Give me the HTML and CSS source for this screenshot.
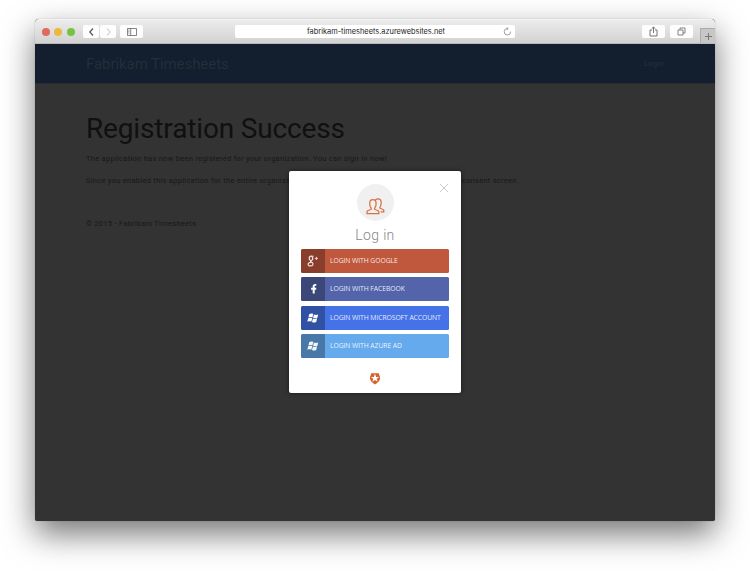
FILE: index.html
```html
<!DOCTYPE html>
<html lang="en">
<head>
<meta charset="utf-8">
<title>Fabrikam Timesheets</title>
<link rel="stylesheet" href="styles.css">
</head>
<body>
<div class="window">
  <header class="toolbar">
    <div class="lights"><i class="red"></i><i class="yellow"></i><i class="green"></i></div>
    <div class="history">
      <button class="tool"><svg width="7" height="10" viewBox="0 0 7 10"><path d="M5 1.5 1.8 5 5 8.5" stroke="#555" stroke-width="1.2"/></svg></button>
      <button class="tool"><svg width="7" height="10" viewBox="0 0 7 10"><path d="M2 1.5 5.2 5 2 8.5" stroke="#ccc" stroke-width="1.1"/></svg></button>
    </div>
    <button class="tool wide"><svg width="10" height="8" viewBox="0 0 10 8"><path d="M.5.5h9v7h-9zM3.7.5v7M1.4 2.2h1M1.4 3.7h1M1.4 5.2h1" stroke="#666" stroke-width=".8"/></svg></button>
    <div class="address"><span>fabrikam-timesheets.azurewebsites.net</span><svg class="reload" width="9" height="9" viewBox="0 0 9 9"><path d="M7.6 4.6A3.2 3.2 0 1 1 4.6 1.6M3.5.1 5.2 1.6 3.7 3.1" stroke="#888" stroke-width=".8"/></svg></div>
    <div class="actions">
      <button class="tool wide"><svg width="9" height="11" viewBox="0 0 9 11"><path d="M3 4H1v6h7V4H6M4.5 7V1M2.8 2.7 4.5 1l1.7 1.7" stroke="#666" stroke-width=".9"/></svg></button>
      <button class="tool wide"><svg width="9" height="9" viewBox="0 0 9 9"><path d="M1 3h5v5H1zM3 3V1h5v5H6" stroke="#777" stroke-width=".9"/></svg></button>
    </div>
    <button class="newtab"><svg width="9" height="9" viewBox="0 0 9 9"><path d="M4.5 1v7M1 4.5h7" stroke="#777"/></svg></button>
  </header>
  <nav class="navbar"><span class="brand">Fabrikam Timesheets</span><span class="login">Login</span></nav>
  <main class="page">
    <h1>Registration Success</h1>
    <p class="first">The application has now been registered for your organization. You can sign in now!</p>
    <p class="second"><span>Since you enabled this application for the entire organization, your users will not see the</span><span>consent screen.</span></p>
    <footer>© 2015 - Fabrikam Timesheets</footer>
  </main>
  <section class="dialog">
    <svg class="close" width="10" height="10" viewBox="0 0 10 10"><path d="m1 1 8 8M9 1 1 9" stroke="#c4c4c4" stroke-width=".9"/></svg>
    <div class="avatar"><svg width="19" height="17" viewBox="0 0 19 17"><path d="M1 15.6v-1.9c0-1.1 1.3-1.5 3.7-2.2.7-.3.7-1 .3-1.5C3.9 8.6 3.7 7.4 3.7 5.4c0-2.3 1.2-3.8 3.2-3.8s3.2 1.5 3.2 3.8c0 2-.2 3.2-1.3 4.6-.4.5-.4 1.2.3 1.5 2.4.7 3.7 1.1 3.7 2.2v1.9zM9.5 1.9C10.2 1.2 11 .9 12 .9c2 0 3.2 1.5 3.2 3.7 0 2-.2 3.1-1.1 4.4-.4.6-.3 1.2.4 1.5 2.1.6 3.3 1 3.3 2v1.4h-3.2" stroke="#d9703f" stroke-width="1.25"/></svg></div>
    <h2>Log in</h2>
    <div class="providers">
      <button class="provider google"><span class="icon"><svg width="12" height="12" viewBox="0 0 12 12"><g stroke="#f0ded9"><ellipse cx="4" cy="3.4" rx="1.7" ry="2.2" stroke-width="1.3"/><path d="M4.2 1.2h2.6" stroke-width=".9"/><path d="M4.7 5.4c-2.2.7-.6 1.5.5 2.2 1.6 1.1.6 3.3-1.6 3.3-1.7 0-2.7-.7-2.4-1.9.2-1 1.4-1.5 3.3-1.6" stroke-width="1.2"/><path d="M9.4 1.8v3.2M7.8 3.4H11" stroke-width=".9"/></g></svg></span><span class="label">LOGIN WITH GOOGLE</span></button>
      <button class="provider facebook"><span class="icon"><svg width="12" height="12" viewBox="0 0 12 12"><path d="M5.7 10.6V6.7H4.1V4.7h1.6V3.5c0-1.7.9-2.6 2.4-2.6h1.2v1.9h-.8c-.7 0-.8.3-.8.9v1h1.6l-.2 2H7.7v3.9z" fill="#fff"/></svg></span><span class="label">LOGIN WITH FACEBOOK</span></button>
      <button class="provider microsoft"><span class="icon"><svg width="12" height="12" viewBox="0 0 12 12"><path d="M2.3 2.1c1.5-.7 2.8-.7 4-.1l-.9 3.4c-1.3-.6-2.6-.6-4 0zM7 2.4c1.3.7 2.7.6 4.2 0l-.9 3.5c-1.5.6-2.9.6-4.2-.1zM1.2 6.2c1.5-.6 2.8-.6 4 0l-.9 3.5c-1.3-.6-2.6-.5-4 0zM5.9 6.5c1.3.7 2.7.7 4.2.1L9.2 10c-1.5.7-2.9.7-4.2 0z" fill="#fff"/></svg></span><span class="label">LOGIN WITH MICROSOFT ACCOUNT</span></button>
      <button class="provider azure"><span class="icon"><svg width="12" height="12" viewBox="0 0 12 12"><path d="M2.3 2.1c1.5-.7 2.8-.7 4-.1l-.9 3.4c-1.3-.6-2.6-.6-4 0zM7 2.4c1.3.7 2.7.6 4.2 0l-.9 3.5c-1.5.6-2.9.6-4.2-.1zM1.2 6.2c1.5-.6 2.8-.6 4 0l-.9 3.5c-1.3-.6-2.6-.5-4 0zM5.9 6.5c1.3.7 2.7.7 4.2.1L9.2 10c-1.5.7-2.9.7-4.2 0z" fill="#f2f6fa"/></svg></span><span class="label">LOGIN WITH AZURE AD</span></button>
    </div>
    <svg class="badge" width="10" height="12" viewBox="0 0 10 12"><path d="M1.2.3h7.6l1 3.1c.8 3-.7 5.4-4.8 8.2C.9 8.8-.6 6.4.2 3.4z" fill="#d4622f"/><path d="m5 .8 1.1 3.1h3.1L6.7 5.8l.9 3L5 7 2.4 8.8l.9-3L.8 3.9h3.1z" fill="#fff"/></svg>
  </section>
</div>
</body>
</html>
```
FILE: styles.css
```css
* { box-sizing: border-box; }
body { margin: 0; height: 571px; padding: 19px 0 0 35px; background: #fff; font-family: Roboto, sans-serif; overflow: hidden; }
svg { display: block; fill: none; flex: none; }
button { border: 0; padding: 0; margin: 0; font: inherit; }
h1, h2, p { margin: 0; font-weight: 400; }
.window { position: relative; width: 680px; height: 502px; background: #333; border-radius: 4px 4px 2px 2px; box-shadow: 0 0 1px rgba(0,0,0,.4), 0 13px 32px rgba(0,0,0,.54); white-space: nowrap; }
.toolbar { display: flex; align-items: center; height: 25px; padding-left: 7px; border-radius: 4px 4px 0 0; background: linear-gradient(#ececec, #d2d2d2); border-top: 1px solid #f4f4f4; border-bottom: 1px solid #b9b9b9; }
.lights { display: flex; gap: 4.4px; width: 41px; }
.lights i { width: 8px; height: 8px; border-radius: 50%; }
.red { background: #e2695b; }
.yellow { background: #edb93c; }
.green { background: #76c344; }
.history { display: flex; gap: 1px; width: 37px; }
.tool { display: flex; align-items: center; justify-content: center; width: 16px; height: 13px; background: #fdfdfd; border-radius: 2px; }
.tool.wide { width: 23px; }
.address { display: flex; align-items: center; justify-content: center; position: relative; width: 280px; height: 13px; margin-left: 92px; padding-left: 2px; background: #fff; border-radius: 2px; font: 7.4px/13px Inter, sans-serif; color: #222; }
.reload { position: absolute; right: 3px; top: 2px; }
.actions { display: flex; gap: 5px; margin-left: 127px; }
.newtab { display: flex; align-items: center; justify-content: center; width: 15px; height: 15px; margin: 8px 0 0 auto; background: #c7c7c7; border: 1px solid #acacac; border-width: 1px 0 0 1px; }
.navbar { display: flex; align-items: center; justify-content: space-between; height: 40px; padding: 0 51px; background: #131e2f; border-bottom: 1px solid #292d32; color: #252d38; }
.brand { font-size: 15px; letter-spacing: -.07px; }
.login { font-size: 7.5px; letter-spacing: .3px; color: #273140; }
.page { padding: 27px 51px 0; color: #181818; font-size: 7.5px; line-height: 12px; }
h1 { font-size: 28px; line-height: 36px; letter-spacing: -.15px; color: #101010; }
.first { margin-top: 6px; letter-spacing: .28px; }
.second { display: flex; justify-content: space-between; width: 433px; margin-top: 10px; letter-spacing: .28px; }
footer { margin-top: 31px; letter-spacing: .28px; }
.dialog { position: absolute; left: 254px; top: 152px; display: flex; flex-direction: column; align-items: center; width: 172px; height: 222px; padding-top: 12px; background: #fff; border-radius: 2px; box-shadow: 0 0 4px rgba(0,0,0,.5); }
.close { position: absolute; right: 12px; top: 12px; }
.avatar { display: flex; justify-content: center; width: 37px; height: 37px; margin-top: .5px; padding-top: 14.5px; border-radius: 50%; background: #f0f0f0; }
h2 { margin-top: 4.5px; font-size: 14px; line-height: 20px; font-weight: 300; letter-spacing: .35px; color: #888; }
.providers { display: flex; flex-direction: column; gap: 4.4px; width: 148px; margin-top: 4px; }
.provider { display: flex; height: 24px; border-radius: 1.5px; overflow: hidden; color: #fff; font: 6.8px/24px "Open Sans", sans-serif; text-align: left; }
.icon { display: flex; align-items: center; justify-content: center; width: 24px; background: rgba(0,0,0,.29); }
.label { padding-left: 5px; letter-spacing: -.08px; color: rgba(255,255,255,.88); }
.google { background: #c0583d; }
.facebook { background: #5364ab; }
.microsoft { background: #4672e8; }
.azure { background: #64aaed; }
.badge { margin-top: 15px; }
```
